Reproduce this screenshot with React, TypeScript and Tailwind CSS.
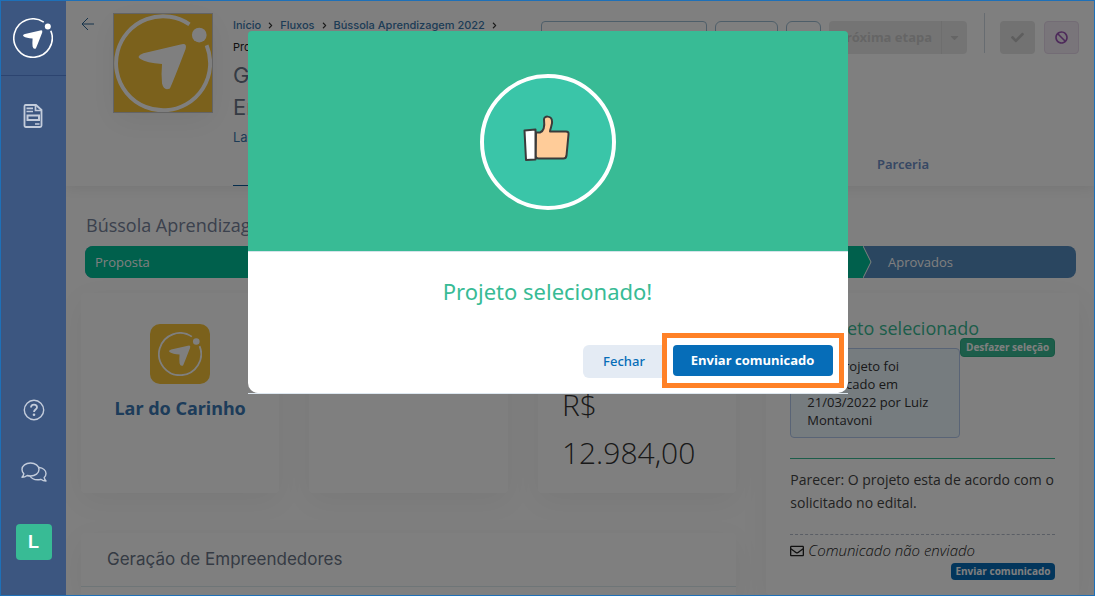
import {
    FaBan,
    FaCaretDown,
    FaCheck,
    FaCheckCircle,
    FaChevronRight,
    FaPrint,
    FaRegEnvelope,
} from "react-icons/fa";

const breadcrumbs = [
    { name: "Início", href: "#" },
    { name: "Fluxos", href: "#" },
    { name: "Bússola Aprendizagem 2022", href: "#" },
];

function Logo({ className }: { className: string }) {
    return (
        <svg viewBox="0 0 100 100" fill="none" className={className} aria-hidden="true">
            <path d="M94.500 32A48 48 0 1 1 77 10.500" stroke="currentColor" strokeWidth="4" />
            <circle cx="87" cy="21.500" r="7.500" fill="currentColor" />
            <path
                d="M68 31L30 40Q22 43 27 46Q33 50 49 51Q48 62 49 71Q51 79 57 76Q60 70 73 36Q75 29 68 31Z"
                fill="currentColor"
            />
        </svg>
    );
}

function BackIcon() {
    return (
        <svg viewBox="0 0 14 14" fill="none" stroke="currentColor" className="size-[14px]" aria-hidden="true">
            <path d="M13 7H1M7 1L1 7L7 13" />
        </svg>
    );
}

function DocumentIcon() {
    return (
        <svg viewBox="0 0 20 24" fill="none" stroke="currentColor" className="h-6 w-5" aria-hidden="true">
            <path d="M2.500 1h10.500l5.500 5v15.500q0 1.500-1.500 1.500h-14q-1.500 0-1.500-1.500v-19q0-1.500 1-1.500z" strokeWidth="1.800" />
            <path d="M12.500 1v5.500h6M3.500 4.300h6.500M3.500 7.500h6.500M12 20h4.500" strokeWidth="1.700" />
            <path d="M4.500 11.500h11.500v4.500h-11.500z" strokeWidth="2" />
        </svg>
    );
}

function HelpIcon() {
    return (
        <svg viewBox="0 0 22 22" fill="none" stroke="currentColor" className="size-[22px]" aria-hidden="true">
            <circle cx="11" cy="11" r="9.700" strokeWidth="1.400" />
            <path d="M8 8.500C8 6.500 9.300 5.600 11 5.600C12.800 5.600 14 6.700 14 8.200C14 10.500 11 10.500 11 13" strokeWidth="1.800" />
            <circle cx="11" cy="15.800" r="1.300" fill="currentColor" stroke="none" />
        </svg>
    );
}

function ChatIcon() {
    return (
        <svg viewBox="0 0 26 20" fill="none" stroke="currentColor" strokeWidth="1.400" strokeLinejoin="round" className="h-5 w-[26px]" aria-hidden="true">
            <path d="M9.500 1C14.300 1 18 3.900 18 7.500S14.300 14 9.500 14C8.300 14 7.200 13.800 6.200 13.500C4.700 14.600 3 15.200 1 15.200C1.900 14.200 2.600 13 2.800 11.800C1.700 10.600 1 9.200 1 7.500C1 3.900 4.700 1 9.500 1Z" />
            <path d="M18 5.500C22 5.900 25 8.300 25 11.500C25 13.100 24.300 14.500 23.200 15.600C23.400 16.800 24.100 18 25 19C23 19 21.300 18.400 19.800 17.300C18.800 17.600 17.700 17.800 16.500 17.800C13.100 17.800 10.300 16.300 9 14" />
        </svg>
    );
}

function ThumbsUp() {
    return (
        <svg viewBox="0 0 48 48" className="size-12" stroke="#3b3b3b" strokeWidth="2" strokeLinejoin="round" aria-hidden="true">
            <path
                d="M13 18.500h4c3-1 5-5 4-13c0-4 7-4 8 1c1 4-2 8-2 11h16q3 0 2.500 3l-2 21q-.500 3-3 3h-25q-3 0-3-3z"
                fill="#ffcc99"
            />
            <path d="M1.500 16.500l11-1v30l-9.500.500z" fill="#fff" />
        </svg>
    );
}

function Sidebar() {
    return (
        <aside className="relative z-20 flex w-[65px] shrink-0 flex-col items-center bg-[#3c5680] text-[#c3ccdb]">
            <a href="#" aria-label="Início" className="flex h-[75px] w-full items-center justify-center border-b border-[#2c4470] pr-[2px] text-white">
                <Logo className="size-10" />
            </a>
            <a href="#" aria-label="Projetos" className="mt-7 pr-[2px]">
                <DocumentIcon />
            </a>
            <div className="mt-auto flex flex-col items-center pb-[35px]">
                <a href="#" aria-label="Ajuda">
                    <HelpIcon />
                </a>
                <a href="#" aria-label="Mensagens" className="mt-[41px]">
                    <ChatIcon />
                </a>
                <button className="mt-[42px] size-9 rounded bg-[#38bb95] font-['Liberation_Sans',sans-serif] text-lg font-bold text-white">
                    L
                </button>
            </div>
        </aside>
    );
}

function Header() {
    return (
        <header className="flex h-[185px] bg-white px-[15px] pt-3 shadow-[0_2px_12px_rgba(0,0,0,0.08)]">
            <a href="#" aria-label="Voltar" className="mt-1 w-8 shrink-0 text-[#2c6796]">
                <BackIcon />
            </a>
            <div className="size-[100px] shrink-0 border border-[#c9c9c9] bg-[#f6c238] text-white shadow-[0_8px_30px_rgba(0,0,0,0.06)]">
                <Logo className="size-full" />
            </div>
            <div className="ml-5 flex min-w-0 flex-1 flex-col">
                <div className="flex min-h-0 flex-1 justify-between">
                    <div className="w-[300px] pt-[2px] font-[Inter,sans-serif]">
                        <nav aria-label="Trilha" className="flex h-5 items-center text-[11px] font-medium whitespace-nowrap text-[#3a78ac]">
                            {breadcrumbs.map((item) => (
                                <span key={item.name} className="flex items-center">
                                    <a href={item.href}>{item.name}</a>
                                    <FaChevronRight className="mx-[6px] size-[7px] text-[#333]" />
                                </span>
                            ))}
                        </nav>
                        <p className="text-[11px] leading-6 text-[#222]">Projeto</p>
                        <h1 className="w-[200px] text-[22px] leading-8 text-[#6b7688]">Geração de Empreendedores</h1>
                        <a href="#" className="text-[13px] leading-7 text-[#3a78ac]">Lar do Carinho</a>
                    </div>
                    <div className="flex gap-2 text-[13px]">
                        <input aria-label="Buscar" className="mt-2 h-[33px] w-[166px] rounded border border-[#9dbdd3]" />
                        <button aria-label="Imprimir" className="mt-2 flex h-[33px] w-[63px] items-center justify-center rounded-md border border-[#9dbdd3] text-[#5d7f9b]">
                            <FaPrint />
                        </button>
                        <button aria-label="Mais" className="mt-2 h-[33px] w-[35px] rounded-md border border-[#9dbdd3]" />
                        <div className="mt-2 flex h-[33px] rounded bg-[#e9e9e9] text-[#cbcbcb]">
                            <button className="w-[113px] border-r border-[#dcdcdc] font-['Noto_Sans',sans-serif] text-[13px] font-bold">
                                Próxima etapa
                            </button>
                            <button aria-label="Outras etapas" className="flex w-[25px] items-center justify-center">
                                <FaCaretDown />
                            </button>
                        </div>
                        <div className="ml-[9px] h-10 w-px bg-[#cfd8e2]" />
                        <button aria-label="Selecionar" className="mt-2 ml-[7px] flex h-[33px] w-[35px] items-center justify-center rounded bg-[#e4e4e4] text-[#bdbdbd]">
                            <FaCheck />
                        </button>
                        <button aria-label="Recusar" className="mt-2 ml-px flex h-[33px] w-[35px] items-center justify-center rounded border border-[#e6d8ea] bg-[#f3eaf5] text-[#9b55b4]">
                            <FaBan />
                        </button>
                    </div>
                </div>
                <nav aria-label="Seções" className="flex h-10 shrink-0 justify-between font-['Noto_Sans',sans-serif] text-[13px] leading-9 font-semibold text-[#6e90c8]">
                    <a href="#" className="w-20 border-b border-[#0b5a9a] pl-4">Projeto</a>
                    <a href="#" className="mr-[150px]">Parceria</a>
                </nav>
            </div>
        </header>
    );
}

function SelectionCard() {
    return (
        <section className="h-full rounded bg-white px-6 pt-[25px] shadow-[0_8px_30px_rgba(0,0,0,0.05)]">
            <h2 className="flex items-center gap-[5px] text-lg leading-5 whitespace-nowrap text-[#38bb95]">
                <FaCheckCircle className="size-[18px]" />
                Projeto selecionado
            </h2>
            <div className="flex items-start">
                <p className="mt-[10px] h-[90px] w-[170px] shrink-0 rounded border border-[#b3c9ec] bg-[#edf8ff] px-4 py-2 text-[13px] leading-[18px] text-[#333]">
                    Este projeto foi modificado em 21/03/2022 por Luiz Montavoni
                </p>
                <button className="h-[19px] flex-1 rounded border border-[#2fae87] bg-[#38bb95] text-[10px] font-bold whitespace-nowrap text-white">
                    Desfazer seleção
                </button>
            </div>
            <p className="mt-5 border-t border-[#38bb95] pt-[9px] text-sm leading-[23px] text-[#444]">
                Parecer: O projeto esta de acordo com o solicitado no edital.
            </p>
            <div className="mt-5 border-t border-dashed border-[#b4bccb] pt-1">
                <p className="flex h-[23px] items-center text-[15px] font-light text-[#222] italic">
                    <FaRegEnvelope className="mr-1 size-[14px]" />
                    Comunicado não enviado
                </p>
                <button className="mt-px ml-auto block h-[17px] w-[104px] rounded bg-[#066db8] text-[10px] font-bold whitespace-nowrap text-white">
                    Enviar comunicado
                </button>
            </div>
        </section>
    );
}

function Content() {
    return (
        <main className="flex flex-1 flex-col pt-[27px]">
            <h2 className="px-5 text-lg leading-6 text-[#76829a]">Bússola Aprendizagem 2022</h2>
            <div className="mt-[9px] mr-[18px] ml-[19px] flex h-8 shrink-0 overflow-hidden rounded-lg bg-[#548cc0] text-[13px] leading-8 text-white">
                <div className="w-[778px] bg-[#00c098] pl-[10px]">Proposta</div>
                <svg viewBox="0 0 9 32" className="h-8 w-[9px]" aria-hidden="true">
                    <path d="M0 0L8 16L0 32Z" fill="#00c098" />
                    <path d="M0 0L8 16L0 32" fill="none" stroke="#fff" />
                </svg>
                <div className="pl-4">Aprovados</div>
            </div>
            <div className="mt-[15px] flex flex-1">
                <div className="flex w-2/3 flex-col px-[15px]">
                    <div className="grid shrink-0 grid-cols-3 gap-[30px]">
                        <div className="flex h-[200px] flex-col items-center rounded bg-white pt-[31px] shadow-[0_8px_30px_rgba(0,0,0,0.05)]">
                            <div className="flex size-[60px] items-center justify-center rounded-[10px] bg-[#f6c238] text-white">
                                <Logo className="size-[44px]" />
                            </div>
                            <h3 className="mt-3 font-['Noto_Sans',sans-serif] text-lg leading-6 font-bold whitespace-nowrap text-[#3a78b4]">
                                Lar do Carinho
                            </h3>
                        </div>
                        <div className="h-[200px] rounded bg-white shadow-[0_8px_30px_rgba(0,0,0,0.05)]" />
                        <div className="flex h-[200px] flex-col justify-end rounded bg-white px-6 pb-4 shadow-[0_8px_30px_rgba(0,0,0,0.05)]">
                            <p className="text-3xl leading-[48px] font-light text-[#333]">R$ 12.984,00</p>
                        </div>
                    </div>
                    <section className="mt-10 flex-1 rounded-t bg-white shadow-[0_8px_30px_rgba(0,0,0,0.05)]">
                        <h2 className="border-b border-[#dcebee] px-[26px] font-[Inter,sans-serif] text-[17px] leading-[53px] text-[#6b7688]">
                            Geração de Empreendedores
                        </h2>
                    </section>
                </div>
                <div className="w-1/3 px-[15px]">
                    <SelectionCard />
                </div>
            </div>
        </main>
    );
}

function SelectedModal() {
    return (
        <div className="absolute inset-0 z-10 flex items-start justify-center bg-black/50 pt-[30px]">
            <div role="dialog" aria-modal="true" aria-labelledby="modal-title" className="w-[600px]">
                <div className="flex h-[220px] items-center justify-center rounded-t bg-[#38bb95] pt-[2px]">
                    <div className="flex size-[136px] items-center justify-center rounded-full border-4 border-white bg-[#3ac5a8] pr-[2px] pb-2">
                        <ThumbsUp />
                    </div>
                </div>
                <div className="rounded-b-[10px] border-t border-[#d5e3ea] bg-white px-1 pb-[5px]">
                    <h2 id="modal-title" className="pt-[23px] pb-[26px] text-center font-['Noto_Sans',sans-serif] text-[22px] leading-8 text-[#38bb95]">
                        Projeto selecionado!
                    </h2>
                    <div className="flex items-start justify-end text-[13px]">
                        <button className="mt-3 h-[33px] w-[79px] rounded-l-md bg-[#e4ebf4] pl-1 font-['Noto_Sans',sans-serif] font-medium text-[#066db8]">
                            Fechar
                        </button>
                        <div className="border-[5px] border-[#ff8127] px-[6px] py-[7px]">
                            <button className="h-[31px] w-[160px] rounded bg-[#066db8] font-bold text-white">
                                Enviar comunicado
                            </button>
                        </div>
                    </div>
                </div>
                <div className="h-px bg-[#dde7f0]" />
            </div>
        </div>
    );
}

export default function App() {
    return (
        <div className="relative flex h-screen overflow-hidden border border-[#1e70b8] bg-[#fefefe] font-['Open_Sans',sans-serif]">
            <Sidebar />
            <div className="flex min-w-0 flex-1 flex-col">
                <Header />
                <Content />
            </div>
            <SelectedModal />
        </div>
    );
}
